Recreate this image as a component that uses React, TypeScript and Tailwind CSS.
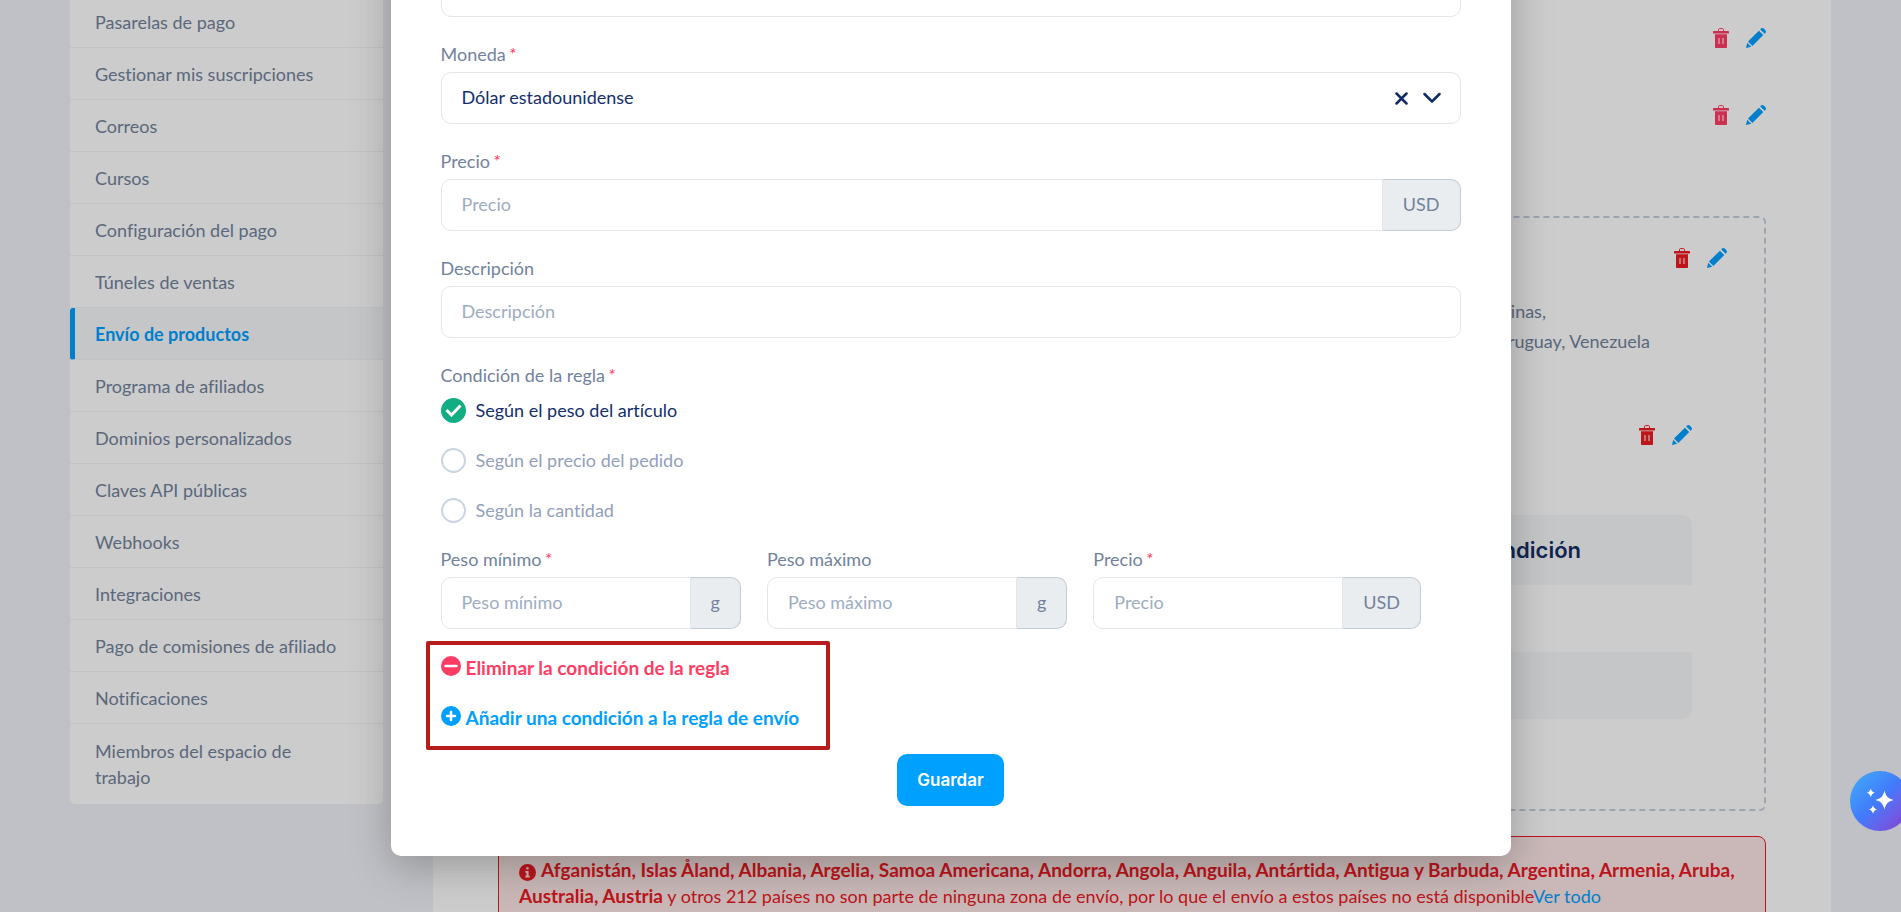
import { useState, type ReactNode } from 'react'

const menuItems = [
  'Pasarelas de pago',
  'Gestionar mis suscripciones',
  'Correos',
  'Cursos',
  'Configuración del pago',
  'Túneles de ventas',
  'Envío de productos',
  'Programa de afiliados',
  'Dominios personalizados',
  'Claves API públicas',
  'Webhooks',
  'Integraciones',
  'Pago de comisiones de afiliado',
  'Notificaciones',
  'Miembros del espacio de trabajo',
]

const conditions = [
  { id: 'weight', label: 'Según el peso del artículo' },
  { id: 'price', label: 'Según el precio del pedido' },
  { id: 'quantity', label: 'Según la cantidad' },
]

function TrashIcon() {
  return (
    <svg width="16" height="20" viewBox="0 0 16 20" fill="currentColor" aria-hidden="true">
      <path d="M5.5 3.2V1.6C5.5 1 5.9.6 6.5.6h3c.6 0 1 .4 1 1v1.6" fill="none" stroke="currentColor" strokeWidth="1" />
      <path d="M1 3h14c.6 0 1 .4 1 1v1.6H0V4c0-.6.4-1 1-1Z" />
      <path fillRule="evenodd" d="M2 6.300h12V19c0 .6-.4 1-1 1H3c-.6 0-1-.4-1-1V6.300Zm3.500 3.700v6h1v-6h-1Zm4 0v6h1v-6h-1Z" />
    </svg>
  )
}

function PencilIcon() {
  return (
    <svg width="20" height="20" viewBox="0 0 20 20" fill="currentColor" aria-hidden="true">
      <path d="M14.200 1.400 15 .6c.8-.8 2-.8 2.800 0l1.600 1.600c.8.8.8 2 0 2.800l-.8.8-4.400-4.400Z" />
      <path d="m12.900 2.700 4.400 4.400L6.400 18 2 13.600 12.900 2.700Z" />
      <path d="M1.200 14.800 5.200 18.800 0 20l1.200-5.200Z" />
    </svg>
  )
}

function RowActions({ trashColor, className = '' }: { trashColor: string; className?: string }) {
  return (
    <div className={`flex justify-end gap-[17px] ${className}`}>
      <button type="button" aria-label="Eliminar" className={trashColor}>
        <TrashIcon />
      </button>
      <button type="button" aria-label="Editar" className="text-[#00a0ff]">
        <PencilIcon />
      </button>
    </div>
  )
}

function Sidebar() {
  return (
    <nav className="-mt-[4px] w-[313px] shrink-0 self-start overflow-hidden rounded-b-[5px] bg-white">
      {menuItems.map((item) => {
        const active = item === 'Envío de productos'
        return (
          <a
            key={item}
            href="#"
            className={`block border-b border-[#f2f3f6] pt-[13px] pr-[36px] pb-[12px] leading-[26px] last:border-b-0 last:pt-[14px] last:pb-[14px] ${
              active
                ? 'rounded-l-[3px] border-l-[5px] border-l-[#00a0ff] bg-[#f7f8fa] pl-[20px] font-bold text-[#00a0ff]'
                : 'pl-[25px] text-[#72829c]'
            }`}
          >
            {item}
          </a>
        )
      })}
    </nav>
  )
}

function ShippingZones() {
  return (
    <main className="min-w-0 flex-1 bg-white px-[65px] pt-[28px] pb-20">
      <RowActions trashColor="text-[#ff3c64]" />
      <RowActions trashColor="text-[#ff3c64]" className="mt-[57px]" />

      <section className="mt-[91px] rounded-[6px] border-2 border-dashed border-[#c3cfdd] px-[37px] pt-[30px] pb-[90px]">
        <RowActions trashColor="text-[#f01a22]" />
        <div className="mt-[28px] text-right leading-[30px] text-[#72829c]">
          <p className="pr-[181px]">Filipinas,</p>
          <p className="pr-[77px]">Uruguay, Venezuela</p>
        </div>
        <div className="mt-[69px] px-[35px]">
          <RowActions trashColor="text-[#f01a22]" />
          <table className="mt-[70px] w-full border-separate border-spacing-0">
            <thead>
              <tr>
                <th className="h-[70px] rounded-t-[10px] bg-[#f7f8fa] pr-[111px] text-right font-[Inter,sans-serif] text-[22px] font-semibold text-[#142f66]">
                  Condición
                </th>
              </tr>
            </thead>
            <tbody>
              <tr>
                <td className="h-[67px]" />
              </tr>
              <tr>
                <td className="h-[67px] rounded-b-[10px] bg-[#f7f8fa]" />
              </tr>
            </tbody>
          </table>
        </div>
      </section>

      <div className="mt-[25px] rounded-[8px] border border-[#ed1c24] bg-[#fde6e6] px-[20px] py-[20px] leading-[26px] text-[#eb1923]">
        <svg className="mr-[5px] inline-block align-[-4px]" width="17" height="17" viewBox="0 0 17 17" aria-hidden="true">
          <circle cx="8.500" cy="8.500" r="8.500" fill="currentColor" />
          <path d="M7.200 3.200h2.400v2.200H7.200zM6.300 7h3.300v4.800h1.100v1.800H6.300v-1.800h1.100v-3H6.300z" fill="#fde6e6" />
        </svg>
        <strong className="text-[19px]">
          Afganistán, Islas Åland, Albania, Argelia, Samoa Americana, Andorra, Angola, Anguila, Antártida, Antigua y
          Barbuda, Argentina, Armenia, Aruba, Australia, Austria
        </strong>{' '}
        y otros 212 países no son parte de ninguna zona de envío, por lo que el envío a estos países no está disponible
        <a href="#" className="text-[#00a0ff]">
          Ver todo
        </a>
      </div>
    </main>
  )
}

function Required() {
  return <span className="ml-[3px] text-[#ff3c64] italic">*</span>
}

function FieldLabel({ htmlFor, required, children }: { htmlFor: string; required?: boolean; children: ReactNode }) {
  return (
    <label htmlFor={htmlFor} className="mb-[6px] block leading-[24px] text-[#72829c]">
      {children}
      {required && <Required />}
    </label>
  )
}

interface TextFieldProps {
  id: string
  label: string
  required?: boolean
  addon?: string
  inputClass?: string
}

function TextField({ id, label, required, addon, inputClass = 'w-full' }: TextFieldProps) {
  return (
    <div>
      <FieldLabel htmlFor={id} required={required}>
        {label}
      </FieldLabel>
      <div className="flex h-[52px]">
        <input
          id={id}
          type="text"
          placeholder={label}
          className={`min-w-0 border border-[#e1e6ea] bg-white px-[20px] pb-[2px] text-[#142f6b] placeholder:text-[#9eacc0] ${
            addon ? 'rounded-l-[10px]' : 'rounded-[10px]'
          } ${inputClass}`}
        />
        {addon && (
          <span className="flex items-center rounded-r-[10px] border border-l-0 border-[#c3ccd3] bg-[#e9edf0] px-[20px] pb-[2px] text-[#72829c]">
            {addon}
          </span>
        )}
      </div>
    </div>
  )
}

function RuleDialog() {
  const [condition, setCondition] = useState('weight')

  return (
    <div
      role="dialog"
      aria-label="Regla de envío"
      className="-mt-[85px] w-full max-w-[1120px] self-start rounded-[10px] bg-white px-[50px] py-[50px] shadow-[0_10px_40px_rgba(0,0,0,0.25)]"
    >
      <form className="flex flex-col">
        <input
          type="text"
          aria-label="Nombre"
          className="h-[52px] w-full rounded-[10px] border border-[#e1e6ea] px-[20px]"
        />

        <div className="mt-[25px]">
          <FieldLabel htmlFor="currency" required>
            Moneda
          </FieldLabel>
          <div className="relative">
            <select
              id="currency"
              className="h-[52px] w-full appearance-none rounded-[10px] border border-[#e1e6ea] bg-white pr-[80px] pb-[2px] pl-[20px] text-[#142f6b]"
            >
              <option>Dólar estadounidense</option>
            </select>
            <div className="pointer-events-none absolute inset-y-0 right-[20px] flex items-center gap-[15px] text-[#0f2a66]">
              <button type="button" aria-label="Quitar moneda" className="pointer-events-auto">
                <svg width="13" height="13" viewBox="0 0 13 13" fill="none" stroke="currentColor" strokeWidth="2.500" strokeLinecap="round">
                  <path d="m1.500 1.500 10 10M11.500 1.500l-10 10" />
                </svg>
              </button>
              <svg width="18" height="12" viewBox="0 0 18 12" fill="none" stroke="currentColor" strokeWidth="2.500" strokeLinecap="round" strokeLinejoin="round" aria-hidden="true">
                <path d="m1.500 2 7.500 7.500L16.500 2" />
              </svg>
            </div>
          </div>
        </div>

        <div className="mt-[25px]">
          <TextField id="price" label="Precio" required addon="USD" />
        </div>
        <div className="mt-[25px]">
          <TextField id="description" label="Descripción" />
        </div>

        <fieldset className="mt-[25px]">
          <legend className="leading-[24px] text-[#72829c]">
            Condición de la regla
            <Required />
          </legend>
          <div className="mt-[11px] flex flex-col gap-[25px]">
            {conditions.map(({ id, label }) => {
              const checked = condition === id
              return (
                <label
                  key={id}
                  className={`flex items-center gap-[10px] leading-[25px] ${checked ? 'text-[#142f6b]' : 'text-[#939fba]'}`}
                >
                  <span className="grid size-[25px] place-items-center">
                    <input
                      type="radio"
                      name="condition"
                      value={id}
                      checked={checked}
                      onChange={() => setCondition(id)}
                      className="col-start-1 row-start-1 size-[25px] appearance-none rounded-full border-2 border-[#cbd5e2] checked:border-[#12ad83] checked:bg-[#12ad83]"
                    />
                    {checked && (
                      <svg className="pointer-events-none col-start-1 row-start-1" width="17" height="13" viewBox="0 0 17 13" fill="none" stroke="white" strokeWidth="3" aria-hidden="true">
                        <path d="m1.500 6 5 5 9-9.500" />
                      </svg>
                    )}
                  </span>
                  {label}
                </label>
              )
            })}
          </div>
        </fieldset>

        <div className="mt-[24px] flex flex-wrap gap-[26px]">
          <TextField id="min-weight" label="Peso mínimo" required addon="g" inputClass="w-[250px]" />
          <TextField id="max-weight" label="Peso máximo" addon="g" inputClass="w-[250px]" />
          <TextField id="rule-price" label="Precio" required addon="USD" inputClass="w-[250px]" />
        </div>

        <div className="relative mt-[27px] flex flex-col items-start gap-[26px] text-[19px] font-bold">
          <button type="button" className="flex gap-[5px] leading-[24px] text-[#ff3c64]">
            <svg width="20" height="20" viewBox="0 0 20 20" aria-hidden="true">
              <circle cx="10" cy="10" r="10" fill="currentColor" />
              <path d="M4.500 10h11" stroke="white" strokeWidth="2.500" strokeLinecap="round" />
            </svg>
            Eliminar la condición de la regla
          </button>
          <button type="button" className="flex gap-[5px] leading-[24px] text-[#00a0ff]">
            <svg width="20" height="20" viewBox="0 0 20 20" aria-hidden="true">
              <circle cx="10" cy="10" r="10" fill="currentColor" />
              <path d="M6 10h8M10 6v8" stroke="white" strokeWidth="2.500" strokeLinecap="round" />
            </svg>
            Añadir una condición a la regla de envío
          </button>
          {/* Highlight frame around both actions */}
          <div className="pointer-events-none absolute -top-[15px] -left-[15px] h-[109px] w-[404px] rounded-[2px] border-4 border-[#b71c1c]" />
        </div>

        <button
          type="submit"
          className="mt-[24px] h-[52px] self-center rounded-[10px] bg-[#00a0ff] px-[20px] pt-[2px] font-[Inter,sans-serif] text-[17px] font-semibold text-white"
        >
          Guardar
        </button>
      </form>
    </div>
  )
}

export default function App() {
  return (
    <div className="relative h-screen overflow-hidden bg-[#f1f2f8] font-[Lato,sans-serif] text-[18px] [font-variant-ligatures:none]">
      <div className="flex min-h-full gap-[50px] px-[70px]">
        <Sidebar />
        <ShippingZones />
      </div>

      <div className="absolute inset-0 flex justify-center bg-black/20">
        <RuleDialog />
      </div>

      <button
        type="button"
        aria-label="Asistente"
        className="absolute top-[771px] -right-[9px] size-[60px] rounded-full bg-linear-135 from-[#42adf8] via-[#4279fb] to-[#8433cf]"
      >
        <svg width="60" height="60" viewBox="0 0 60 60" fill="white" aria-hidden="true">
          <path d="M34.500 19.500c1.200 5.600 3.400 7.900 9 9.500-5.600 1.600-7.800 3.900-9 9.500-1.200-5.600-3.400-7.900-9-9.500 5.600-1.600 7.800-3.900 9-9.500Z" />
          <path d="M20.800 17.500c.7 2.600 1.700 3.600 4.200 4.300-2.500.7-3.500 1.700-4.200 4.300-.7-2.600-1.700-3.600-4.200-4.300 2.500-.7 3.500-1.700 4.200-4.300Z" />
          <path d="M23 34.200c.7 2.600 1.700 3.600 4.200 4.300-2.500.7-3.500 1.700-4.200 4.300-.7-2.600-1.700-3.600-4.200-4.300 2.500-.7 3.500-1.700 4.200-4.300Z" />
        </svg>
      </button>
    </div>
  )
}
